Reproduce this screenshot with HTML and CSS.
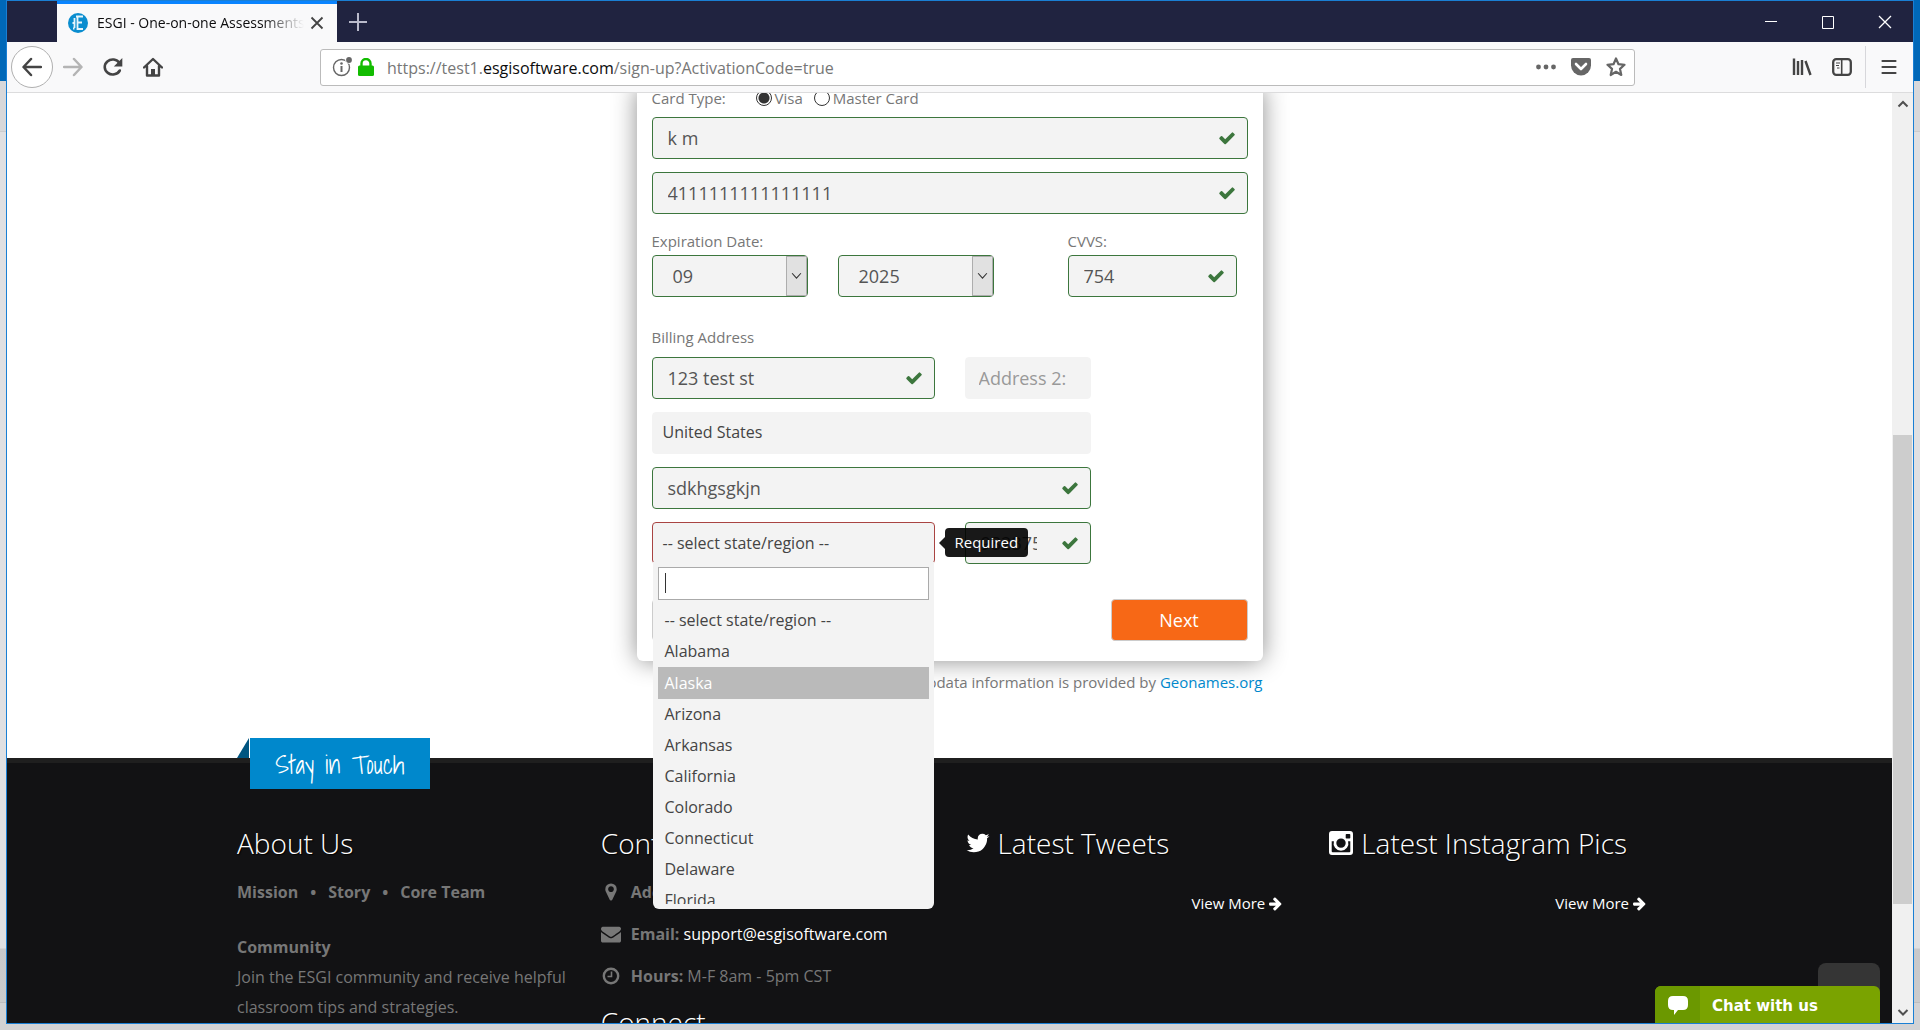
FILE: index.html
```html
<!DOCTYPE html>
<html lang="en">
<head>
<meta charset="utf-8">
<title>ESGI - One-on-one Assessments</title>
<link rel="stylesheet" href="styles.css">
</head>
<body>
<svg class="sprite" aria-hidden="true">
  <symbol id="check" viewBox="0 0 1792 1792"><path d="M1671 566q0 40-28 68l-724 724-136 136q-28 28-68 28t-68-28l-136-136-362-362q-28-28-28-68t28-68l136-136q28-28 68-28t68 28l294 295 656-657q28-28 68-28t68 28l136 136q28 28 28 68z"/></symbol>
  <symbol id="arrow" viewBox="0 0 1792 1792"><path d="M1600 960q0 54-37 91l-651 651q-39 37-91 37-51 0-90-37l-75-75q-38-38-38-91t38-91l293-293h-704q-52 0-84.5-37.5t-32.5-90.5v-128q0-53 32.5-90.5t84.5-37.5h704l-293-294q-38-36-38-90t38-90l75-75q38-38 90-38 53 0 91 38l651 651q37 35 37 90z"/></symbol>
</svg>
<div class="window">
  <header class="tabstrip">
    <div class="tab">
      <svg class="favicon" viewBox="0 0 20 20" aria-hidden="true"><circle cx="10" cy="10" r="10" fill="#0a8dcf"/><path d="M8 3.500h7M9.500 3.500V16h5.500M9.500 9.500H14M6.500 5v10M4.500 10h2M6.500 15.500h-1.500" stroke="#e8f5fb" stroke-width="1.800" fill="none"/></svg>
      <span class="tab-title">ESGI - One-on-one Assessments</span>
      <button class="tab-close" aria-label="Close tab"><svg viewBox="0 0 14 14" width="14" height="14"><path d="M1.500 1.500l11 11M12.500 1.500l-11 11" stroke="#444" stroke-width="1.800"/></svg></button>
    </div>
    <button class="new-tab" aria-label="New tab"><svg viewBox="0 0 18 18" width="18" height="18"><path d="M9 0v18M0 9h18" stroke="#b9bacb" stroke-width="2"/></svg></button>
    <div class="controls">
      <button aria-label="Minimize"><svg viewBox="0 0 14 14" width="14" height="14"><path d="M1 6.500h12" stroke="#fff"/></svg></button>
      <button aria-label="Maximize"><svg viewBox="0 0 14 14" width="14" height="14"><path d="M1.500 1.500h11v12h-11z" stroke="#fff" fill="none"/></svg></button>
      <button aria-label="Close"><svg viewBox="0 0 14 14" width="14" height="14"><path d="M1 1l12 12M13 1L1 13" stroke="#fff" stroke-width="1.300"/></svg></button>
    </div>
  </header>
  <nav class="toolbar">
    <button class="tool back" aria-label="Back"><svg viewBox="0 0 20 20" width="20" height="20"><path d="M19 10H2M9 2L1.500 10 9 18" fill="none" stroke="#444" stroke-width="2.500" stroke-linecap="round" stroke-linejoin="round"/></svg></button>
    <button class="tool" aria-label="Forward"><svg viewBox="0 0 20 20" width="20" height="20"><path d="M1 10h17M11 2l7.500 8-7.500 8" fill="none" stroke="#b4b4b4" stroke-width="2.500" stroke-linecap="round" stroke-linejoin="round"/></svg></button>
    <button class="tool" aria-label="Reload"><svg viewBox="0 0 20 20" width="20" height="20"><path d="M16.500 6A8 7.500 0 1 0 16.800 13.500" fill="none" stroke="#444" stroke-width="2.600" stroke-linecap="round"/><path d="M19.300 1v8.500h-8.500z" fill="#444"/></svg></button>
    <button class="tool" aria-label="Home"><svg viewBox="0 0 20 20" width="20" height="20"><path d="M1 10.500L10 2l9 8.500M4 9v9.500h12V9" fill="none" stroke="#444" stroke-width="2.400" stroke-linecap="round" stroke-linejoin="round"/><path d="M8 12h4v7H8z" fill="#444"/></svg></button>
    <div class="urlbar">
      <svg viewBox="0 0 20 20" width="20" height="20" aria-hidden="true"><circle cx="9.500" cy="10.500" r="8" fill="none" stroke="#666" stroke-width="1.400"/><circle cx="9.500" cy="6.500" r="1.300" fill="#666"/><path d="M9.500 9v6" stroke="#666" stroke-width="2"/><circle cx="17" cy="3" r="3.800" fill="#fff"/><circle cx="17" cy="3" r="2.900" fill="#666"/></svg>
      <svg class="lock" viewBox="0 0 16 18" width="16" height="18" aria-hidden="true"><path d="M3.500 9V5.500a4.500 4.500 0 0 1 9 0V9" fill="none" stroke="#12bc00" stroke-width="2.400"/><rect y="7.500" width="16" height="10.500" rx="1.500" fill="#12bc00"/></svg>
      <span class="url">https://test1.<b>esgisoftware.com</b>/sign-up?ActivationCode=true</span>
      <svg viewBox="0 0 20 20" width="20" height="20" aria-hidden="true"><g fill="#666"><circle cx="2.500" cy="10" r="2.400"/><circle cx="10" cy="10" r="2.400"/><circle cx="17.500" cy="10" r="2.400"/></g></svg>
      <svg viewBox="0 0 20 20" width="20" height="20" aria-hidden="true"><path d="M2 1h16a2 2 0 0 1 2 2v5.500a10 10 0 0 1-20 0V3a2 2 0 0 1 2-2z" fill="#666"/><path d="M5 7l5 5 5-5" fill="none" stroke="#fff" stroke-width="2.600" stroke-linecap="round" stroke-linejoin="round"/></svg>
      <svg viewBox="0 0 20 20" width="20" height="20" aria-hidden="true"><path d="M10 1.500l2.500 5.700 6 .6-4.500 4.100 1.300 6.100-5.300-3.200L4.700 18 6 11.900 1.500 7.800l6-.6z" fill="none" stroke="#666" stroke-width="2.200" stroke-linejoin="round"/></svg>
    </div>
    <button class="tool" aria-label="Library"><svg viewBox="0 0 20 20" width="20" height="20"><path d="M2 1.500V18M6 4v14M10 3v15M13.500 4L18.500 18" stroke="#444" stroke-width="2.400" fill="none"/></svg></button>
    <button class="tool" aria-label="Sidebars"><svg viewBox="0 0 20 20" width="20" height="20"><rect x="1.200" y="2.200" width="17.600" height="15.600" rx="3" fill="none" stroke="#444" stroke-width="2.300"/><path d="M9.700 2v16" stroke="#444" stroke-width="1.600"/><path d="M4 6h4M4 8.500h3M5 11h2.500" stroke="#444"/></svg></button>
    <span class="divider"></span>
    <button class="tool" aria-label="Menu"><svg viewBox="0 0 20 20" width="20" height="20"><path d="M3.500 4h13M3.500 10h13M3.500 16h13" stroke="#444" stroke-width="2.200" stroke-linecap="round"/></svg></button>
  </nav>

  <div class="viewport">
    <div class="page">
      <main class="signup">
        <form class="card">
          <fieldset class="card-type">
            <legend>Card Type:</legend>
            <label><input type="radio" name="type" checked>Visa</label>
            <label><input type="radio" name="type">Master Card</label>
          </fieldset>
          <div class="field valid"><input type="text" aria-label="Name on card" value="k m"><svg class="tick"><use href="#check"/></svg></div>
          <div class="field valid"><input type="text" aria-label="Card number" value="4111111111111111"><svg class="tick"><use href="#check"/></svg></div>
          <div class="expiry">
            <div class="labelled month">
              <label for="month">Expiration Date:</label>
              <div class="field valid drop"><select id="month"><option>09</option></select><svg viewBox="0 0 10 10" class="chev"><path d="M1 2.500l4 4.500 4-4.500" fill="none" stroke="#333"/></svg></div>
            </div>
            <div class="labelled year">
              <div class="field valid drop"><select aria-label="Expiration year"><option>2025</option></select><svg viewBox="0 0 10 10" class="chev"><path d="M1 2.500l4 4.500 4-4.500" fill="none" stroke="#333"/></svg></div>
            </div>
            <div class="labelled cvv">
              <label for="cvv">CVVS:</label>
              <div class="field valid"><input id="cvv" type="text" value="754"><svg class="tick"><use href="#check"/></svg></div>
            </div>
          </div>
          <section class="billing">
            <h2>Billing Address</h2>
            <div class="split">
              <div class="field valid"><input type="text" aria-label="Address" value="123 test st"><svg class="tick"><use href="#check"/></svg></div>
              <div class="field extra"><input type="text" aria-label="Address 2" placeholder="Address 2:"></div>
            </div>
            <div class="field country"><select aria-label="Country"><option>United States</option></select></div>
            <div class="field valid"><input type="text" aria-label="City" value="sdkhgsgkjn"><svg class="tick"><use href="#check"/></svg></div>
            <div class="split">
              <div class="field invalid state">
                <button type="button" class="combo" aria-haspopup="listbox" aria-expanded="true">-- select state/region --</button>
                <div class="tooltip" role="tooltip">Required</div>
                <div class="menu">
                  <input class="search" type="text" aria-label="Search state">
                  <ul role="listbox" aria-label="State">
                    <li role="option">-- select state/region --</li>
                    <li role="option">Alabama</li>
                    <li role="option" class="active" aria-selected="true">Alaska</li>
                    <li role="option">Arizona</li>
                    <li role="option">Arkansas</li>
                    <li role="option">California</li>
                    <li role="option">Colorado</li>
                    <li role="option">Connecticut</li>
                    <li role="option">Delaware</li>
                    <li role="option">Florida</li>
                  </ul>
                </div>
              </div>
              <div class="field valid zip"><input type="text" aria-label="Zip code" value="982375"><svg class="tick"><use href="#check"/></svg></div>
            </div>
          </section>
          <div class="actions">
            <button type="button" class="btn" aria-label="Previous"></button>
            <button type="button" class="btn primary">Next</button>
          </div>
        </form>
        <p class="credit">Geodata information is provided by <a href="#">Geonames.org</a></p>
      </main>

      <footer class="footer">
        <div class="container">
          <div class="ribbon">Stay in Touch</div>
          <section>
            <h3>About Us</h3>
            <p class="links"><a href="#">Mission</a><span>•</span><a href="#">Story</a><span>•</span><a href="#">Core Team</a></p>
            <p class="community"><strong>Community</strong><br>Join the ESGI community and receive helpful classroom tips and strategies.</p>
          </section>
          <section>
            <h3>Contact Us</h3>
            <ul class="contact">
              <li><svg viewBox="0 0 1792 1792"><path d="M1152 640q0-106-75-181t-181-75-181 75-75 181 75 181 181 75 181-75 75-181zm256 0q0 109-33 179l-364 774q-16 33-47.500 52t-67.500 19-67.500-19-46.500-52l-365-774q-33-70-33-179 0-212 150-362t362-150 362 150 150 362z"/></svg><strong>Address:</strong></li>
              <li><svg viewBox="0 0 1792 1792"><path d="M1792 710v794q0 66-47 113t-113 47h-1472q-66 0-113-47t-47-113v-794q44 49 101 87 362 246 497 345 57 42 92.500 65.500t94.500 48 110 24.500h2q51 0 110-24.500t94.500-48 92.500-65.500q170-123 498-345 57-39 100-87zm0-294q0 79-49 151t-122 123q-376 261-468 325-10 7-42.500 31t-54 38.500-52 32.500-57.500 27-50 9h-2q-23 0-50-9t-57.500-27-52-32.500-54-38.500-42.500-31q-91-64-262-182.500t-205-142.500q-62-42-117-115.500t-55-136.500q0-78 41.500-130t118.500-52h1472q65 0 112.500 47t47.500 113z"/></svg><strong>Email:</strong>&nbsp;<a href="#">support@esgisoftware.com</a></li>
              <li><svg viewBox="0 0 20 20"><circle cx="10" cy="10" r="7.200" fill="none" stroke="#777" stroke-width="2.400"/><path d="M10.500 5.500v5h-4" fill="none" stroke="#777" stroke-width="1.600"/></svg><strong>Hours:</strong>&nbsp;M-F 8am - 5pm CST</li>
            </ul>
            <h3>Connect</h3>
          </section>
          <section>
            <h3><svg viewBox="0 0 1792 1792"><path d="M1684 408q-67 98-162 167 1 14 1 42 0 130-38 259.500t-115.500 248.500-184.500 210.500-258 146-323 54.500q-271 0-496-145 35 4 78 4 225 0 401-138-105-2-188-64.500t-114-159.500q33 5 61 5 43 0 85-11-112-23-185.500-111.500t-73.500-205.500v-4q68 38 146 41-66-44-105-115t-39-154q0-88 44-163 121 149 294.500 238.500t371.500 99.500q-8-38-8-74 0-134 94.500-228.500t228.500-94.500q140 0 236 102 109-21 205-78-37 115-142 178 93-10 186-50z"/></svg>Latest Tweets</h3>
            <a class="more" href="#">View More <svg><use href="#arrow"/></svg></a>
          </section>
          <section>
            <h3><svg viewBox="0 0 26 26"><path fill-rule="evenodd" d="M4 1h18a3 3 0 0 1 3 3v18a3 3 0 0 1-3 3H4a3 3 0 0 1-3-3V4a3 3 0 0 1 3-3zM18.500 4a.8.8 0 0 0-.8.800v2.900a.8.800 0 0 0 .8.800h3a.8.8 0 0 0 .8-.8V4.800a.8.8 0 0 0-.8-.8zM3.700 11.300v10a1 1 0 0 0 1 1h16.600a1 1 0 0 0 1-1v-10h-2.200a7.400 7.400 0 1 1-14.200 0zM13 8.400a4.700 4.700 0 1 0 0 9.400 4.700 4.700 0 0 0 0-9.400z"/></svg>Latest Instagram Pics</h3>
            <a class="more" href="#">View More <svg><use href="#arrow"/></svg></a>
          </section>
        </div>
      </footer>
      <button class="to-top" aria-label="Back to top"></button>
      <button class="chat"><span class="chat-icon"><svg viewBox="0 0 22 20" width="22" height="20"><path d="M6 1h10q5 0 5 5v4q0 5-5 5h-5l-4 5v-5H6q-5 0-5-5V6q0-5 5-5z" fill="#fff"/></svg></span><span class="chat-text">Chat with us</span></button>
    </div>
    <div class="scrollbar" aria-hidden="true">
      <svg viewBox="0 0 12 12" width="12" height="12"><path d="M1.500 8.500L6 4l4.500 4.500" fill="none" stroke="#505050" stroke-width="2"/></svg>
      <div class="track"><div class="thumb"></div></div>
      <svg viewBox="0 0 12 12" width="12" height="12"><path d="M1.500 4L6 8.500 10.500 4" fill="none" stroke="#505050" stroke-width="2"/></svg>
    </div>
  </div>
</div>
</body>
</html>
```
FILE: styles.css
```css
* { box-sizing: border-box; }
body {
  margin: 0;
  height: 100vh;
  padding: 0 6px 6px;
  overflow: hidden;
  background: linear-gradient(#0068b8 81px, #d8d8da 81px, #d8d8da 131px, #b8b8b8 131px, #e0e0e2 132px, #e0e0e2 948px, #c8c8ca 949px, #cbcbcc 1002px, #aaa 1002px, #d2d2d4 1003px);
  font-family: "Open Sans", "Noto Sans", sans-serif;
  font-size: 15px;
  line-height: 20px;
  color: #777;
}
button { border: 0; padding: 0; background: none; font: inherit; }
svg { display: block; flex: none; }
h2, h3, p, ul { margin: 0; padding: 0; font-weight: normal; }
a { text-decoration: none; }
.sprite { position: absolute; width: 0; height: 0; }

.window {
  height: 100%;
  display: flex;
  flex-direction: column;
  border: 1px solid #1a7fd4;
  background: #fff;
}

/* Tab strip */
.tabstrip { display: flex; height: 41px; flex: none; background: #202340; }
.tab {
  display: flex;
  align-items: center;
  width: 280px;
  margin-left: 50px;
  padding: 0 13px 0 11px;
  background: #f9f9fa;
  border-top: 3px solid #0a84ff;
}
.favicon { width: 20px; height: 20px; }
.tab-title {
  flex: 1;
  min-width: 0;
  margin: 0 6px 0 9px;
  overflow: hidden;
  white-space: nowrap;
  color: #0c0c0d;
  font-size: 14px;
  -webkit-mask-image: linear-gradient(to right, #000 80%, transparent);
  mask-image: linear-gradient(to right, #000 80%, transparent);
}
.new-tab { padding: 0 12px; }
.controls { display: flex; margin-left: auto; }
.controls button { width: 57px; display: grid; place-items: center; }

/* Toolbar */
.toolbar {
  display: flex;
  align-items: center;
  flex: none;
  height: 51px;
  padding: 0 4px;
  background: #f9f9fa;
  border-bottom: 1px solid #dcdcdd;
}
.tool { width: 40px; height: 40px; display: grid; place-items: center; flex: none; }
.tool.back { width: 42px; height: 42px; border: 1px solid #b0b0b0; border-radius: 50%; background: #fff; }
.urlbar {
  flex: 1;
  display: flex;
  align-items: center;
  gap: 15px;
  height: 37px;
  margin: 0 147px;
  padding: 0 8px 0 11px;
  border: 1px solid #bbb;
  border-radius: 3px;
  background: #fff;
}
.lock { margin-left: -9px; }
.url { flex: 1; padding-top: 2px; font-size: 16px; color: #777; white-space: nowrap; margin-left: -2px; }
.url b { font-weight: normal; color: #0c0c0d; }
.divider { width: 1px; height: 42px; margin: 0 3px; background: #d7d7db; }

/* Page pane */
.viewport { flex: 1; min-height: 0; display: flex; overflow: hidden; }
.page { flex: 1; position: relative; overflow: hidden; display: flex; flex-direction: column; }
.scrollbar {
  width: 21px;
  flex: none;
  display: flex;
  flex-direction: column;
  align-items: center;
  padding: 5px 0;
  background: #f0f0f0;
}
.track { flex: 1; width: 19px; padding: 325px 0 102px; }
.thumb { height: 100%; background: #cdcdcd; }

/* Sign-up card */
.signup { width: 100%; max-width: 626px; margin: 0 auto 65px; }
.card {
  display: flex;
  flex-direction: column;
  gap: 13px;
  margin-top: -5px;
  padding: 0 15px 20px;
  background: #fff;
  border-radius: 0 0 6px 6px;
  box-shadow: 0 0 25px rgba(0, 0, 0, .45);
}
.card-type { display: flex; align-items: center; gap: 11px; margin: 0 0 -4px; padding: 0; border: 0; }
.card-type legend { float: left; padding: 0; width: 93px; }
.card-type label { display: flex; align-items: center; gap: 3px; }
.card-type input {
  appearance: none;
  width: 16px;
  height: 16px;
  margin: 0;
  border: 1px solid #333;
  border-radius: 50%;
  background: #fff;
}
.card-type input:checked { background: radial-gradient(#333 5px, #fff 6px); }
.field {
  position: relative;
  height: 42px;
  border: 1px solid #f3f3f3;
  border-radius: 4px;
  background: #f3f3f3;
}
.valid { border-color: #3c763d; }
.invalid { border-color: #a94442; }
.field > input, .field > select {
  display: block;
  appearance: none;
  width: 100%;
  height: 100%;
  padding: 0 15px;
  border: 0;
  outline: 0;
  background: none;
  font: inherit;
  font-size: 18px;
  color: #555;
}
.field > input::placeholder { color: #999; opacity: 1; }
.extra > input { padding: 0 13px; }
.tick { position: absolute; top: 11px; right: 11px; width: 18px; height: 18px; fill: #3c763d; }
.drop > select { padding: 0 20px; }
.chev {
  position: absolute;
  top: 0;
  right: 0;
  width: 21px;
  height: 40px;
  padding: 0 4px;
  background: #e1e1e1;
  border: 1px solid #adadad;
  pointer-events: none;
}
.expiry { display: flex; align-items: flex-end; gap: 30px; margin-top: 4px; }
.labelled { display: flex; flex-direction: column; gap: 4px; width: 156px; }
.labelled.cvv { width: 169px; margin-left: 44px; }
.billing { display: flex; flex-direction: column; gap: 13px; width: 439px; margin-top: 17px; }
.billing h2 { font-size: 15px; line-height: 20px; margin-bottom: -3px; }
.split { display: grid; grid-template-columns: 283px 1fr; gap: 30px; }
.country > select { padding: 0 10px 2px; font-size: 16px; color: #444; }
.zip > input { padding-right: 53px; }
.combo { width: 100%; height: 100%; padding: 0 10px; text-align: left; font-size: 16px; color: #444; }
.tooltip {
  position: absolute;
  z-index: 3;
  left: 292px;
  top: 5px;
  padding: 4px 10px 5px;
  border-radius: 4px;
  background: rgba(0, 0, 0, .9);
  color: #fff;
}
.tooltip::before {
  content: "";
  position: absolute;
  left: -6px;
  top: 9px;
  border: solid transparent;
  border-width: 6px 6px 6px 0;
  border-right-color: #1a1a1a;
}
.menu {
  position: absolute;
  z-index: 2;
  top: 39px;
  left: 0;
  right: 0;
  height: 347px;
  display: flex;
  flex-direction: column;
  padding: 5px;
  border-radius: 0 0 6px 6px;
  background: #f3f3f3;
  font-size: 16px;
  color: #444;
}
.search {
  height: 33px;
  flex: none;
  margin-bottom: 5px;
  border: 1px solid #aaa;
  background: linear-gradient(#333, #333) 6px 5px / 1px 20px no-repeat #fff;
}
.menu ul { flex: 1; overflow: hidden; list-style: none; }
.menu li { padding-left: 7px; line-height: 31px; }
.menu .active { line-height: 32px; background: #bababa; color: #fff; }
.actions { display: flex; justify-content: space-between; margin-top: 22px; }
.btn { width: 137px; height: 42px; border: 1px solid #ccc; border-radius: 4px; background: #fff; font-size: 18px; }
.btn.primary { background: #f76816; color: #fff; }
.credit { margin-top: 11px; padding-bottom: 1px; text-align: right; }
.credit a { color: #0088cc; }

/* Footer */
.footer { flex: 1; border-top: 5px solid #1f1f1f; background: #121214; font-size: 16px; line-height: 30px; }
.container {
  position: relative;
  display: grid;
  grid-template-columns: repeat(4, 1fr);
  width: 100%;
  max-width: 1455px;
  margin: 0 auto;
  padding-top: 59px;
}
.container section { padding: 0 15px; }
.ribbon {
  position: absolute;
  left: 28px;
  top: -25px;
  width: 180px;
  height: 51px;
  background: #0088cc;
  color: #fff;
  font: 25px/54px "Shadows Into Light", "Open Sans", cursive;
  font-weight: 300;
  text-align: center;
}
.ribbon::before {
  content: "";
  position: absolute;
  left: -13px;
  top: 0;
  border: solid transparent;
  border-width: 0 0 20px 12px;
  border-bottom-color: #005580;
}
.footer h3 {
  display: flex;
  align-items: center;
  gap: 7px;
  line-height: 42px;
  font-size: 28px;
  font-weight: 300;
  color: #fff;
  text-shadow: 1px 1px 1px #000;
}
.footer h3 svg { width: 26px; height: 26px; fill: #fff; }
.links { display: flex; gap: 12px; margin-top: 13px; font-weight: bold; }
.links a { color: #777; }
.community { margin-top: 25px; }
.contact { padding-top: 1px; list-style: none; }
.contact li { display: flex; align-items: center; margin-top: 12px; }
.contact svg { width: 20px; height: 20px; margin-right: 10px; fill: #777; }
.contact a { color: #fff; }
.contact + h3 { margin-top: 10px; }
.more { display: flex; justify-content: flex-end; align-items: center; gap: 3px; margin: 24px 15px 0 0; font-size: 15px; color: #fff; }
.more svg { width: 15px; height: 15px; fill: #fff; }
.to-top { position: absolute; right: 12px; bottom: 0; width: 62px; height: 60px; border-radius: 8px 8px 0 0; background: #353535; }
.chat {
  position: absolute;
  right: 12px;
  bottom: 0;
  display: flex;
  width: 225px;
  height: 37px;
  overflow: hidden;
  border-radius: 6px 6px 0 0;
  background: #7aa300;
  color: #fff;
  font: bold 15px/40px "DejaVu Sans", sans-serif;
}
.chat-icon { display: grid; place-items: center; width: 45px; height: 37px; background: #6b9800; }
.chat-text { padding-left: 12px; }
```
